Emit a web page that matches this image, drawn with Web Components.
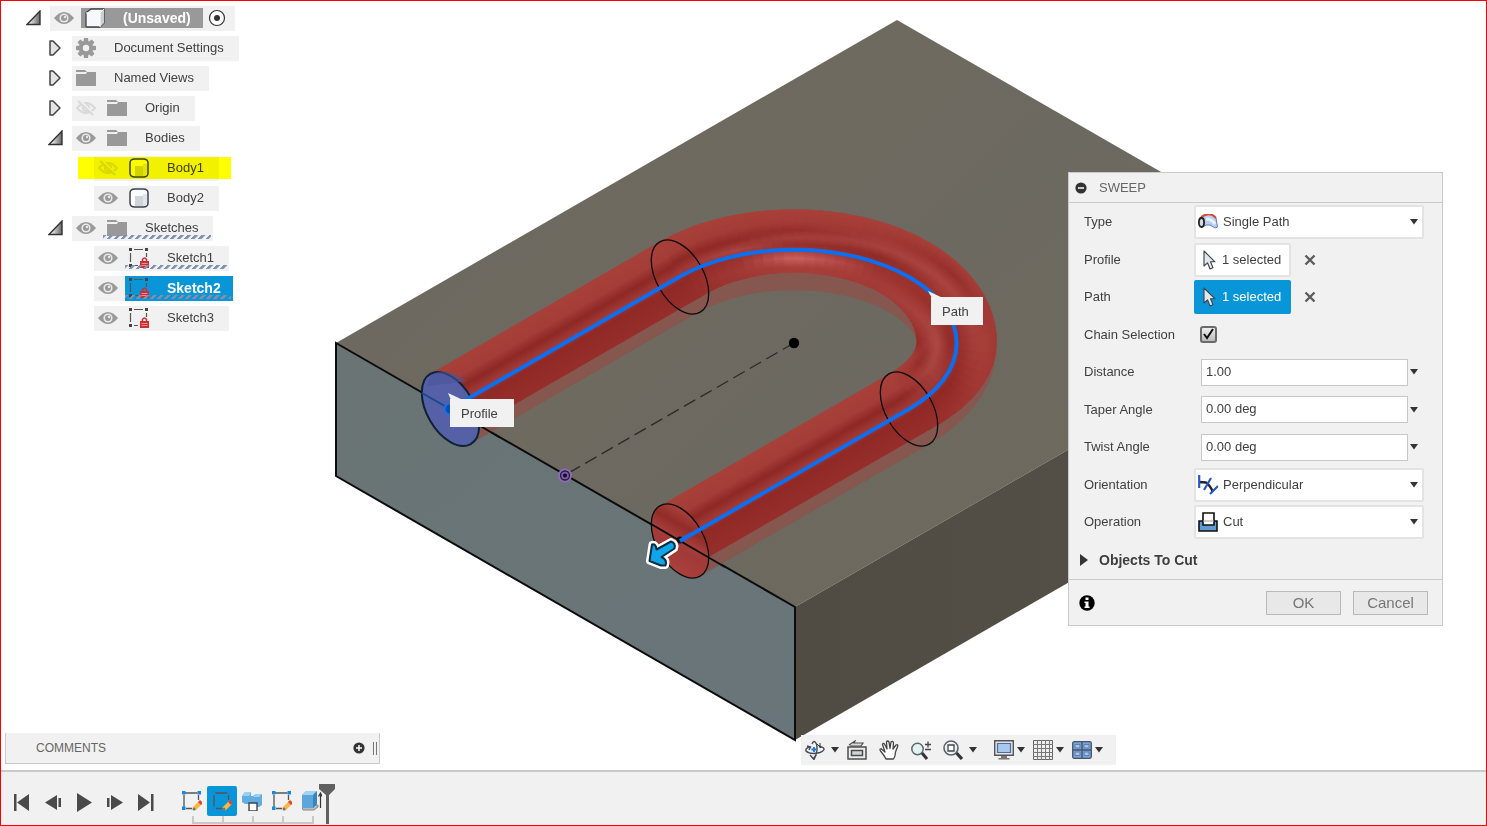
<!DOCTYPE html>
<html lang="en">
<head>
<meta charset="utf-8">
<title>Sweep</title>
<style>
html,body{margin:0;height:100%}
body{font:13px/16px "Liberation Sans",Arial,sans-serif;color:#3f3f3f;background:#fff}
</style>
</head>
<body>
<cad-app></cad-app>
<script>
const ICONS = {
  open: '<svg width="16" height="16" viewBox="0 0 16 16"><defs><linearGradient id="g" x1="0" x2="1"><stop offset=".2" stop-color="#eee"/><stop offset="1" stop-color="#666"/></linearGradient></defs><path d="M1 14.5H14V1Z" fill="url(#g)" stroke="#333" stroke-width="1.4"/></svg>',
  closed: '<svg width="16" height="16" viewBox="0 0 16 16"><path d="M2 1H5L12 8L5 15H2Z" fill="#e4e4e4" stroke="#444" stroke-width="1.5" stroke-linejoin="round"/></svg>',
  eye: '<svg width="20" height="16" viewBox="0 0 20 16"><path d="M0 8Q10-4 20 8Q10 20 0 8Z" fill="#999"/><circle cx="10" cy="8" r="4.6" fill="#e9e9e9"/><circle cx="10" cy="8" r="3" fill="#999"/><circle cx="11" cy="7" r="1.2" fill="#e9e9e9"/></svg>',
  hidden: '<svg width="20" height="16" viewBox="0 0 20 16"><g fill="none" stroke="#d9d9d9" stroke-width="2"><path d="M1 8Q10-2 19 8Q10 18 1 8Z"/><circle cx="10" cy="8" r="3"/><path d="M3 0L18 15" stroke="#f0f0f0" stroke-width="3"/><path d="M2 1L17 15"/></g></svg>',
  cube: '<svg width="20" height="20" viewBox="0 0 20 20"><path d="M1 5Q1 4 2 4L6 1H19V15L15 19H2Q1 19 1 18Z" fill="#f7f8fa" stroke="#444" stroke-width="1.3" stroke-linejoin="round"/><path d="M15 5L19 1V15L15 19Z" fill="#c9cfd8"/><path d="M1 5H15V19M15 5L19 1" fill="none" stroke="#fff"/></svg>',
  gear: '<svg width="20" height="20" viewBox="0 0 20 20"><g fill="#999"><circle cx="10" cy="10" r="7"/><path d="M8 0H12L12.6 4H7.4ZM8 20H12L12.6 16H7.4Z"/><path d="M8 0H12L12.6 4H7.4ZM8 20H12L12.6 16H7.4Z" transform="rotate(45 10 10)"/><path d="M8 0H12L12.6 4H7.4ZM8 20H12L12.6 16H7.4Z" transform="rotate(90 10 10)"/><path d="M8 0H12L12.6 4H7.4ZM8 20H12L12.6 16H7.4Z" transform="rotate(135 10 10)"/></g><circle cx="10" cy="10" r="3.2" fill="#f1f1f1"/></svg>',
  folder: '<svg width="20" height="16" viewBox="0 0 20 16"><path d="M0 0H9L11 2H0ZM0 4H10L11 2H20V16H0Z" fill="#999"/><path d="M0 2.6H9" stroke="#eee"/></svg>',
  body: '<svg width="20" height="20" viewBox="0 0 20 20"><path d="M1 5Q1 1 6 1H14Q19 1 19 5V15Q19 19 14 19H6Q1 19 1 15Z" fill="#fbfbfc" stroke="#3c434d" stroke-width="1.5"/><path d="M6 8H14V18H6Z" fill="#aeb4be" opacity=".55"/><path d="M14 6H18V15Q18 18 14 18Z" fill="#e2e5ea"/></svg>',
  sketch: '<svg width="20" height="20" viewBox="0 0 20 20"><g stroke="#555" stroke-width="1.2" fill="none"><path d="M5 1.5H14M1.5 5V14M17.500 5V9M5 17.500H9"/></g><g fill="#444"><path d="M0 0H3V3H0ZM16 0H19V3H16ZM0 16H3V19H0Z"/></g><path d="M13.500 14V11.500Q15.500 8.500 17.500 11.500V14" fill="none" stroke="#cc2e35" stroke-width="1.500"/><path d="M11 13H20V20H11Z" fill="#cc2e35"/><path d="M12.500 15.500H18.500M12.500 17.500H18.500" stroke="#f08f8f"/></svg>',
  target: '<svg width="18" height="18" viewBox="0 0 18 18"><circle cx="9" cy="9" r="7.5" fill="#fff" stroke="#333" stroke-width="1.2"/><circle cx="9" cy="9" r="3" fill="#333"/></svg>',
  minus: '<svg width="12" height="12" viewBox="0 0 12 12"><circle cx="6" cy="6" r="5.600" fill="#333"/><path d="M3 6H9" stroke="#fff" stroke-width="1.500"/></svg>',
  plus: '<svg width="12" height="12" viewBox="0 0 12 12"><circle cx="6" cy="6" r="5.600" fill="#333"/><path d="M3 6H9M6 3V9" stroke="#fff" stroke-width="1.500"/></svg>',
  down: '<svg width="8" height="6" viewBox="0 0 8 6"><path d="M0 0H8L4 5.500Z" fill="#333"/></svg>',
  right: '<svg width="8" height="12" viewBox="0 0 8 12"><path d="M0 0L8 6L0 12Z" fill="#333"/></svg>',
  cross: '<svg width="12" height="12" viewBox="0 0 12 12"><path d="M1.500 1.500L10.500 10.500M10.500 1.500L1.500 10.500" stroke="#5d5d5d" stroke-width="2.400"/></svg>',
  info: '<svg width="16" height="16" viewBox="0 0 16 16"><circle cx="8" cy="8" r="7.700" fill="#000"/><path d="M6.500 2.500H9.500V5H6.500ZM5.500 6.500H9.500V11.500H10.500V13H5.500V11.500H6.500V8H5.500Z" fill="#fff"/></svg>',
  cursor: '<svg width="13" height="20" viewBox="0 0 13 20"><path d="M1 1V16L4.500 12.800L7 19L10 17.800L7.500 11.800H12Z" fill="#e3e6ea" stroke="#3d444d" stroke-width="1.100" stroke-linejoin="round"/></svg>',
  pipe: '<svg width="20" height="16" viewBox="0 0 20 16"><path d="M3 3Q12-3 18 4L19.500 13L17 14L12 11Q9 10 4 13Z" fill="#b9cfec" stroke="#5c7fb8"/><path d="M8 5Q14 5 17 10" stroke="#e9f1fb" stroke-width="3" fill="none"/><path d="M3 3Q12-3 18 4" fill="none" stroke="#d8473e" stroke-width="2"/><ellipse cx="3.500" cy="8.500" rx="2.600" ry="4.500" fill="#d7dade" stroke="#222" stroke-width="1.800"/></svg>',
  perp: '<svg width="20" height="20" viewBox="0 0 20 20"><path d="M1 7L8 7.500Q12 10 15 17" fill="none" stroke="#222" stroke-width="2.400"/><path d="M1.200 0V13M13 3L6 15M20 11L12 19" fill="none" stroke="#2456cf" stroke-width="2.200"/></svg>',
  cut: '<svg width="20" height="20" viewBox="0 0 20 20"><path d="M1 9H19V19H1Z" fill="#5f9bd0" stroke="#111" stroke-width="1.600"/><path d="M5 1H16V13H5Z" fill="#fff" stroke="#111" stroke-width="1.600"/><path d="M5 9H16" stroke="#999"/></svg>',
  orbit: '<svg width="20" height="20" viewBox="0 0 20 20"><g fill="none" stroke="#454c55" stroke-width="1.400"><path d="M7 4Q9-1 11.500 4Q13 10 10.500 16L8 19"/><path d="M5 7Q0 8 1 11Q5 15 15 12.500Q21 10 18 7.500L14 6"/><path d="M5 15L9 19.500L11 15M2 6L5.500 7L4 10" /></g><path d="M9 7V12M6.500 9.500H11.500" stroke="#1a7cd6" stroke-width="1.800"/><path d="M12 4L16 8M15 3V8" stroke="#333"/></svg>',
  lookat: '<svg width="20" height="20" viewBox="0 0 20 20"><path d="M1 7H19V19H1Z" fill="#eee" stroke="#4c4c4c" stroke-width="1.500"/><path d="M4.500 10.500H15.500V15.500H4.500Z" fill="#d0d5db" stroke="#4c4c4c" stroke-width="1.500"/><path d="M2 5L8 1L7 3H16L14 6H3" fill="#ddd" stroke="#4c4c4c" stroke-width="1.200"/></svg>',
  hand: '<svg width="20" height="20" viewBox="0 0 20 20"><path d="M7 19Q5 15 1.500 11Q0 8.500 2.500 9L6 12L3.500 4.500Q4 2.500 5.500 4L8 9L7.500 2Q8.500 0 10 2L11 8.500L12 2Q13.500.500 14.500 2.500L14 9L17 5Q19 4 18.800 6L16.500 12Q16.500 16 14.500 19Z" fill="#fff" stroke="#454545" stroke-width="1.300" stroke-linejoin="round"/></svg>',
  zoom: '<svg width="20" height="20" viewBox="0 0 20 20"><circle cx="6.500" cy="9" r="5.700" fill="#e3f2f2" stroke="#5b666b" stroke-width="1.500"/><path d="M11 13L16 19" stroke="#333" stroke-width="3"/><path d="M14 4.500H20M17 1.500V7.500M14 9.500H20" stroke="#444" stroke-width="1.300"/></svg>',
  fit: '<svg width="20" height="20" viewBox="0 0 20 20"><circle cx="8" cy="8" r="7" fill="#eef1f2" stroke="#5b6468" stroke-width="1.600"/><path d="M5 5H11V11H5Z" fill="#fff" stroke="#444" stroke-width="1.300"/><path d="M13.500 13L19 19" stroke="#333" stroke-width="3.200"/></svg>',
  display: '<svg width="20" height="20" viewBox="0 0 20 20"><path d="M.7.700H19.300V15.300H.7Z" fill="#e2e6ea" stroke="#555" stroke-width="1.400"/><path d="M3.500 3.500H16.500V12.500H3.500Z" fill="#a9c8ee" stroke="#4b6e9d" stroke-width="1.200"/><path d="M7 16H13V18H15.500V19.500H4.500V18H7Z" fill="#777"/></svg>',
  grid: '<svg width="20" height="20" viewBox="0 0 20 20"><path d="M.5.500H19.500V19.500H.5Z" fill="#eee" stroke="#666"/><path d="M4.500 0V20M8.500 0V20M12.500 0V20M16.500 0V20M0 4.500H20M0 8.500H20M0 12.500H20M0 16.500H20" stroke="#777"/></svg>',
  views: '<svg width="20" height="18" viewBox="0 0 20 18"><rect x=".7" y=".7" width="18.600" height="16.600" rx="1.500" fill="#7ca2d3" stroke="#41556f" stroke-width="1.300"/><path d="M3 3.500H8V7H3ZM12 3.500H17V7H12ZM3 11H8V14.500H3ZM12 11H17V14.500H12Z" fill="#a6c3e8" stroke="#5c7fae"/><path d="M10 1V17M1 9H19" stroke="#41556f" stroke-width="1.400"/></svg>',
  first: '<svg width="20" height="20" viewBox="0 0 20 20"><path d="M2 1H4.500V18H2ZM17 1V18L5 9.500Z" fill="#4a4a4a"/></svg>',
  prev: '<svg width="20" height="20" viewBox="0 0 20 20"><path d="M14 2V17L2 9.500ZM15.500 5H18V14H15.500Z" fill="#4a4a4a"/></svg>',
  play: '<svg width="20" height="20" viewBox="0 0 20 20"><path d="M3 0L18 9.500L3 19Z" fill="#4a4a4a"/></svg>',
  next: '<svg width="20" height="20" viewBox="0 0 20 20"><path d="M6 2V17L18 9.500ZM2 5H4.500V14H2Z" fill="#4a4a4a"/></svg>',
  last: '<svg width="20" height="20" viewBox="0 0 20 20"><path d="M2 1V18L14 9.500ZM15 1H17.500V18H15Z" fill="#4a4a4a"/></svg>',
  edit: '<svg width="20" height="20" viewBox="0 0 20 20"><path d="M3 2H15.500M2 4V16M16.500 4V9M4 17.500H10" fill="none" stroke="#555" stroke-width="1.300"/><path d="M0 0H3.500V3.500H0ZM15.500 0H19V3.500H15.500ZM0 15.500H3.500V19H0Z" fill="#1489e0"/><path d="M12 18L19 11" stroke="#f5b942" stroke-width="4.200"/><path d="M17.500 12.500L19.500 10.500" stroke="#e4403b" stroke-width="4"/><circle cx="12" cy="18" r="1.500" fill="#777"/></svg>',
  combine: '<svg width="20" height="20" viewBox="0 0 20 20"><path d="M0 5L3 1H9V5H11L14 3H20V14L17 16H11V13H3L0 11Z" fill="#62aee3"/><path d="M0 5L3 1H9L7 5ZM11 6L14 3H20L17 6Z" fill="#9bd0f2"/><path d="M7 12H15V20H7Z" fill="#fff" stroke="#444" stroke-width="1.400"/></svg>',
  extrude: '<svg width="20" height="20" viewBox="0 0 20 20"><path d="M0 16L1 19H12L16 16V14Z" fill="#bbb" stroke="#888"/><path d="M0 4L4 0H15V13L11 17H0Z" fill="#5ba6dd"/><path d="M0 4L4 0H15L11 4Z" fill="#a4d3f2"/><path d="M11 4L15 0V13L11 17Z" fill="#3b84bd"/><path d="M18.500 17V3M16.500 5.500L18.500 2L20 5.500" fill="none" stroke="#333" stroke-width="1.200"/></svg>'
};

class Base extends HTMLElement {
  render(css, html) {
    const t = document.createElement('template');
    t.innerHTML = `<style>*{box-sizing:border-box}svg{display:block;flex:none}${css}</style>${html}`;
    this.attachShadow({mode:'open'}).append(t.content.cloneNode(true));
  }
}

customElements.define('cad-icon', class extends Base {
  connectedCallback() { this.render(':host{display:block;flex:none}', ICONS[this.getAttribute('name')]); }
});

customElements.define('tree-row', class extends Base {
  connectedCallback() {
    const a = n => this.getAttribute(n);
    const ic = n => `<cad-icon name="${n}"></cad-icon>`;
    this.render(`
      :host{display:flex;align-items:center;height:30px;position:relative;padding-left:calc(var(--level) * 22px + 25px)}
      .arrow{width:24px;flex:none;border:0;padding:0;background:none}
      .chip{display:flex;align-items:center;height:25px;background:#f1f1f1}
      .eye{display:block;width:20px;margin:0 7px 0 4px;border:0;padding:0;background:none}
      .item{display:flex;align-items:center;gap:18px;height:100%;padding:0 15px 0 4px;position:relative}
      .icon{width:20px;display:flex;justify-content:center}
      .extra{padding:0 9px 0 5px}
      :host([strong]) .item{font-weight:bold;font-size:14px;color:#fff;padding-right:12px}
      :host([strong=grey]) .item{background:#999;height:20px}
      :host([strong=blue]) .item{background:#0996d8}
      :host([hatch]) .item::after{content:"";position:absolute;left:0;right:2px;bottom:2px;height:4px;
        background:repeating-linear-gradient(135deg,#7f92b5 0 2px,transparent 3px 5px)}
      :host([strong=blue]) .item::after{background:repeating-linear-gradient(135deg,#8b8ba6 0 2px,transparent 3px 5px)}
      :host([marked])::after{content:"";position:absolute;left:77px;width:153px;top:4px;height:22px;background:#ff0;mix-blend-mode:multiply}
    `, `${a('state') ? `<button class="arrow" aria-label="Toggle">${ic(a('state'))}</button>` : '<span class="arrow"></span>'}
      <div class="chip">${a('eye') ? `<button class="eye" aria-label="Visibility">${ic(a('eye'))}</button>` : ''}
      <div class="item"><span class="icon">${ic(a('icon'))}</span><span><slot></slot></span></div>
      ${a('icon') === 'cube' ? `<span class="extra">${ic('target')}</span>` : ''}</div>`);
    this.style.setProperty('--level', a('level'));
  }
});

customElements.define('browser-tree', class extends Base {
  connectedCallback() {
    this.render(':host{display:block;padding-top:2px}', `
      <tree-row level="0" state="open" eye="eye" icon="cube" strong="grey">(Unsaved)</tree-row>
      <tree-row level="1" state="closed" icon="gear">Document Settings</tree-row>
      <tree-row level="1" state="closed" icon="folder">Named Views</tree-row>
      <tree-row level="1" state="closed" eye="hidden" icon="folder">Origin</tree-row>
      <tree-row level="1" state="open" eye="eye" icon="folder">Bodies</tree-row>
      <tree-row level="2" eye="hidden" icon="body" marked>Body1</tree-row>
      <tree-row level="2" eye="eye" icon="body">Body2</tree-row>
      <tree-row level="1" state="open" eye="eye" icon="folder" hatch>Sketches</tree-row>
      <tree-row level="2" eye="eye" icon="sketch" hatch>Sketch1</tree-row>
      <tree-row level="2" eye="eye" icon="sketch" strong="blue" hatch>Sketch2</tree-row>
      <tree-row level="2" eye="eye" icon="sketch">Sketch3</tree-row>`);
  }
});

/* One line of the dialog: a label and the control that goes with it. */
customElements.define('field-row', class extends Base {
  connectedCallback() {
    const kind = this.getAttribute('kind'), label = this.getAttribute('label');
    const value = this.getAttribute('value'), icon = this.getAttribute('icon');
    const control = {
      select: `<div class="wrap"><cad-icon name="${icon}"></cad-icon><select id="c"><option>${value}</option></select><cad-icon class="down" name="down"></cad-icon></div>`,
      pick: `<button id="c" class="pick"><cad-icon name="cursor"></cad-icon>${value}</button><button class="clear" aria-label="Clear ${label}"><cad-icon name="cross"></cad-icon></button>`,
      check: '<input id="c" type="checkbox" checked>',
      text: `<input id="c" class="text" type="text" value="${value}"><button class="more" aria-label="Options"><cad-icon name="down"></cad-icon></button>`
    }[kind];
    this.render(`
      :host{display:flex;align-items:center;padding:0 18px 0 15px}
      :host([kind=text]){padding-right:24px}
      label{width:110px;flex:none}
      button,input,select{font:inherit;color:inherit;margin:0}
      .wrap{flex:1;position:relative;display:flex;align-items:center}
      .wrap cad-icon{position:absolute;left:4px;width:20px}
      .wrap .down{left:auto;right:6px;width:8px}
      select{appearance:none;width:100%;height:34px;padding:0 0 0 27px;border:2px solid #e3e3e3;border-radius:2px;background:#fff}
      .pick{display:flex;align-items:center;gap:6px;width:97px;height:34px;padding:0 0 0 7px;border:2px solid #e3e3e3;border-radius:2px;background:#fff;white-space:nowrap}
      :host([active]) .pick{background:#0996d8;border-color:#0996d8;color:#fff}
      .clear,.more{border:0;background:none;padding:0}
      .clear{margin-left:13px}
      .more{margin-left:2px}
      .text{flex:1;min-width:0;height:27px;margin-left:7px;padding:0 4px 2px;border:1px solid #c8c8c8;background:#fff}
      [type=checkbox]{appearance:none;width:17px;height:17px;margin-left:6px;border:2px solid #6a6a6a;border-radius:3px;
        background:url("data:image/svg+xml,%3Csvg xmlns='http://www.w3.org/2000/svg' viewBox='0 0 13 13'%3E%3Cpath d='M2 6L5 10L11 1' fill='none' stroke='%23111' stroke-width='2'/%3E%3C/svg%3E"),linear-gradient(#eee,#bbb)}
    `, `<label for="c">${label}</label>${control}`);
  }
});

customElements.define('sweep-dialog', class extends Base {
  connectedCallback() {
    this.render(`
      :host{display:block;width:375px;background:#f1f1f1;border:1px solid #c9c9c9;box-sizing:border-box}
      header{display:flex;align-items:center;gap:12px;height:30px;padding-left:6px;border-bottom:1px solid #c9c9c9;color:#666}
      h2{margin:0;font:inherit}
      .rows>*{height:37px}
      .rows>:nth-child(odd){height:38px}
      .group{display:flex;align-items:center;gap:11px;border:0;background:none;padding:0 0 0 11px;font:bold 14px/16px "Liberation Sans",Arial,sans-serif;color:#3f3f3f}
      footer{display:flex;align-items:center;gap:12px;height:46px;padding:0 14px 0 10px;border-top:1px solid #c9c9c9;margin-top:1px}
      footer button{width:75px;height:24px;border:1px solid #b9b9b9;background:#e8e8e8;color:#777;font:15px/16px "Liberation Sans",Arial,sans-serif;padding:0}
      .info{margin-right:auto}
    `, `<header><cad-icon name="minus"></cad-icon><h2>SWEEP</h2></header>
      <div class="rows">
        <field-row kind="select" label="Type" icon="pipe" value="Single Path"></field-row>
        <field-row kind="pick" label="Profile" value="1 selected"></field-row>
        <field-row kind="pick" label="Path" value="1 selected" active></field-row>
        <field-row kind="check" label="Chain Selection"></field-row>
        <field-row kind="text" label="Distance" value="1.00"></field-row>
        <field-row kind="text" label="Taper Angle" value="0.00 deg"></field-row>
        <field-row kind="text" label="Twist Angle" value="0.00 deg"></field-row>
        <field-row kind="select" label="Orientation" icon="perp" value="Perpendicular"></field-row>
        <field-row kind="select" label="Operation" icon="cut" value="Cut"></field-row>
        <button class="group"><cad-icon name="right"></cad-icon>Objects To Cut</button>
      </div>
      <footer><cad-icon class="info" name="info"></cad-icon><button>OK</button><button>Cancel</button></footer>`);
  }
});

/* The solid block and the preview of the swept tube. */
customElements.define('model-view', class extends Base {
  /* Shaded stripes of the bend: colours by angle along it and by offset from its centre line. */
  bend() {
    const A = 162.6, B = 93.3, cx = 794, cy = 343;
    const keys = [
      [0,   [[40,'a8403a'],[24,'a43c37'],[14,'8e2825'],[3,'a03a37'],[-4,'902825'],[-14,'932b28'],[-40,'98302d']]],
      [.14, [[40,'a8403a'],[26,'a43c37'],[14,'902a27'],[5,'a94542'],[-3,'993330'],[-16,'a23a36'],[-40,'98302d']]],
      [.25, [[40,'a8403a'],[28,'a43c37'],[19,'962e2b'],[12,'a6403c'],[4,'952d2a'],[-9,'cc6260'],[-18,'a8403a'],[-40,'a23a36']]],
      [.42, [[40,'a8403a'],[26,'a03834'],[15,'a8423e'],[6,'8f2a27'],[-4,'9a322e'],[-18,'a53c38'],[-40,'9c332f']]],
      [.58, [[40,'a8403a'],[28,'962e2b'],[16,'ab4540'],[4,'9e3631'],[-10,'9a302c'],[-25,'a9433f'],[-40,'98302b']]],
      [.75, [[40,'9f3732'],[28,'a8403a'],[16,'a53e39'],[2,'97302c'],[-8,'932b28'],[-20,'ae4a46'],[-32,'a03833'],[-40,'8f2a27']]],
      [.88, [[40,'a33a35'],[22,'9c322e'],[6,'902825'],[-6,'a23b38'],[-19,'a94440'],[-30,'952d29'],[-40,'a53d38']]],
      [1,   [[40,'98302d'],[14,'932b28'],[4,'902825'],[-3,'a03a37'],[-14,'8e2825'],[-24,'a43c37'],[-40,'a8403a']]]
    ];
    const rgb = h => [0,2,4].map(i => parseInt(h.substr(i,2),16));
    const mix = (a,b,t) => a.map((v,i) => v + (b[i]-v)*t);
    const across = (stops,s) => {
      for (let i=1;i<stops.length;i++) if (s >= stops[i][0]) {
        const [p,c] = stops[i-1], [q,d] = stops[i];
        return mix(rgb(c),rgb(d),(p-s)/(p-q));
      }
      return rgb(stops[stops.length-1][1]);
    };
    const colour = (t,s) => {
      let i = 1; while (i < keys.length-1 && t > keys[i][0]) i++;
      const k = (t-keys[i-1][0])/(keys[i][0]-keys[i-1][0]);
      return mix(across(keys[i-1][1],s),across(keys[i][1],s),Math.min(1,Math.max(0,k))).map(Math.round);
    };
    const point = (t,s) => {
      const th = Math.PI*(t-.75), c = Math.cos(th), d = Math.sin(th);
      const nx = c/A, ny = d/B, n = Math.hypot(nx,ny);
      return (cx+A*c+s*nx/n).toFixed(1)+' '+(cy+B*d+s*ny/n).toFixed(1);
    };
    let out = '';
    const N = 48;
    for (let s = 39; s >= -39; s -= 2) for (let i = 0; i < N; i++)
      out += `<path d="M${point(i/N,s)}L${point((i+.5)/N,s)}L${point((i+1.25)/N > 1 ? 1 : (i+1.25)/N,s)}" stroke="rgb(${colour((i+.5)/N,s)})"/>`;
    return `<g fill="none" stroke-width="2.6">${out}</g>`;
  }
  connectedCallback() {
    const U = 'M450 409L679 277A162.600 93.300 0 0 1 909 409L680 541';
    const ring = (x,y,extra) => `<ellipse cx="${x}" cy="${y}" rx="40.500" ry="23.500" transform="rotate(60 ${x} ${y})" ${extra}/>`;
    const stops = '<stop offset="0" stop-color="#a8403a"/><stop offset=".2" stop-color="#a43c37"/><stop offset=".33" stop-color="#8e2825"/><stop offset=".46" stop-color="#a03a37"/><stop offset=".56" stop-color="#902825"/><stop offset=".68" stop-color="#932b28"/><stop offset="1" stop-color="#98302d"/>';
    this.render(':host{display:block;overflow:hidden}svg{width:100%;height:100%}text{font-size:13px;fill:#3f3f3f}', `
<svg role="img" aria-label="Sweep preview">
<defs>
<linearGradient id="top" x1="0" y1="0" x2="1" y2=".6"><stop offset="0" stop-color="#6f6b5f"/><stop offset=".25" stop-color="#6e6960"/><stop offset=".45" stop-color="#6f6a60"/><stop offset=".6" stop-color="#6c6961"/><stop offset="1" stop-color="#6f6a5c"/></linearGradient>
<linearGradient id="front" x1="0" y1="0" x2="1" y2="1"><stop offset="0" stop-color="#6a7474"/><stop offset="1" stop-color="#69757a"/></linearGradient>
<linearGradient id="side" x1="0" y1="0" x2="1" y2="0"><stop offset="0" stop-color="#504c44"/><stop offset="1" stop-color="#565147"/></linearGradient>
<linearGradient id="leg1" gradientUnits="userSpaceOnUse" x1="430" y1="374" x2="470" y2="444">${stops}</linearGradient>
<linearGradient id="leg2" gradientUnits="userSpaceOnUse" x1="660" y1="506" x2="700" y2="576">${stops}</linearGradient>
<linearGradient id="cap" gradientUnits="userSpaceOnUse" x1="660" y1="506" x2="700" y2="576"><stop offset="0" stop-color="#a8403a"/><stop offset=".15" stop-color="#a8403a"/><stop offset=".33" stop-color="#922c29"/><stop offset=".48" stop-color="#a53e3b"/><stop offset=".6" stop-color="#a03a38"/><stop offset="1" stop-color="#b2433f"/></linearGradient>
<clipPath id="above"><path clip-rule="evenodd" d="M400 150H1010V343H996.600A202.600 116.300 0 0 1 937.300 425.300L708.300 557.300L690 580L400 600ZM478.300 425.300L707.300 293.300A122.600 70.400 0 0 1 916.600 343L794 343L565 475V520H460Z"/></clipPath>
</defs>
<path d="M336 343L897 20L1356 284L795 607Z" fill="url(#top)"/>
<path d="M336 343L795 607V740L336 476Z" fill="url(#front)"/>
<path d="M795 607L1356 284V417L795 740Z" fill="url(#side)"/>
<path d="M336 343L795 607V740L336 476Z" fill="none" stroke="#0b0b0b" stroke-width="2"/>
<path d="M794 343L565 475" stroke="#2c2a27" stroke-width="1.300" stroke-dasharray="13 6"/>
<path d="${U}" fill="none" stroke="#85574f" stroke-width="81"/>
<g clip-path="url(#above)">
${this.bend()}
<path d="M430 374L660 241.500L700 311.500L470 444Z" fill="url(#leg1)"/>
<path d="M660 506L890 373.500L930 443.500L700 576Z" fill="url(#leg2)"/>
</g>
${ring(680,541,'fill="url(#cap)"')}
<path d="M470 420L500 437.500M651 524L725 567" stroke="#0b0b0b" stroke-width="2"/>
${ring(680,541,'fill="none" stroke="#0b0b0b" stroke-width="1.300"')}
${ring(680,277,'fill="none" stroke="#0b0b0b" stroke-width="1.300"')}
${ring(909,409,'fill="none" stroke="#0b0b0b" stroke-width="1.300"')}
${ring(450.500,409,'fill="#5560a6" stroke="#0e2236" stroke-width="2"')}
<path d="M427 386Q445 384 467 381L460 377Q440 366 430 377Z" fill="#4a559c" opacity=".6"/>
<path d="M422 393L450 409" stroke="#174a91" stroke-width="2"/>
<path d="${U}" fill="none" stroke="#0c6ff0" stroke-width="4"/>
<circle cx="450" cy="409" r="5.500" fill="#0b4fae" stroke="#1b70ea" stroke-width="2"/>
<circle cx="680" cy="540" r="3.500" fill="#111"/>
<path d="M680 541L690 535" stroke="#0c6ff0" stroke-width="4"/>
<circle cx="794" cy="343" r="5.200" fill="#000"/>
<circle cx="565" cy="475.500" r="6" fill="#7f62a8" stroke="#8d6db8" stroke-width="2"/><circle cx="565" cy="475.500" r="4.500" fill="#7a5ba8" stroke="#291a47" stroke-width="1.300"/><circle cx="565" cy="475.500" r="2" fill="#111"/>
<path id="grip" d="M649.500 561L652 544.500Q656 543.500 656.500 549.500L671 541.500Q676 543 674.500 548.500L661.500 557Q667.500 559.500 665.500 565.500L661 565.500Z" fill="#fff" stroke="#fff" stroke-width="7" stroke-linejoin="round"/>
<path d="M649.500 561L652 544.500Q656 543.500 656.500 549.500L671 541.500Q676 543 674.500 548.500L661.500 557Q667.500 559.500 665.500 565.500L661 565.500Z" fill="#10a5e8" stroke="#0c2f40" stroke-width="2" stroke-linejoin="round"/>
<path d="M448 393L463 400H451Z" fill="#f1f1f1"/><rect x="450" y="399" width="64" height="28" fill="#f1f1f1"/><text x="461" y="418">Profile</text>
<path d="M928 291L943 298H932Z" fill="#f1f1f1"/><rect x="931" y="297" width="52" height="28" fill="#f1f1f1"/><text x="942" y="316">Path</text>
</svg>`);
  }
});

customElements.define('comments-bar', class extends Base {
  connectedCallback() {
    this.render(`:host{display:flex;align-items:center;width:375px;height:31px;padding:0 2px 0 30px;background:#f1f1f1;border:solid #c9c9c9;border-width:0 1px 1px;font-size:12px;color:#666;box-sizing:border-box}
      button{margin-left:auto;border:0;padding:0;background:none}
      i{width:4px;height:13px;margin-left:8px;border:solid #777;border-width:0 1px}`,
      '<span>COMMENTS</span><button aria-label="Add comment"><cad-icon name="plus"></cad-icon></button><i></i>');
  }
});

customElements.define('nav-bar', class extends Base {
  connectedCallback() {
    const b = (n, menu) => `<button class="${menu || ''}" aria-label="${n}"><cad-icon name="${n}"></cad-icon>${menu ? '<cad-icon name="down"></cad-icon>' : ''}</button>`;
    this.render(`:host{display:flex;align-items:center;height:30px;margin-top:2px;background:#f1f1f1;padding:0 13px 0 4px}
      button{display:flex;align-items:center;border:0;padding:0;background:none;margin-right:12px}
      .wide{gap:6px;margin-right:8px}
      .tight{gap:3px;margin-right:8px}
      .wide+.tight{margin-left:9px}
      button:last-child{margin-right:0}`,
      b('orbit','wide')+b('lookat')+b('hand')+b('zoom')+b('fit','wide')+b('display','tight')+b('grid','tight')+b('views','tight'));
  }
});

customElements.define('time-line', class extends Base {
  connectedCallback() {
    const b = (n, c) => `<button class="${c || ''}" aria-label="${n}"><cad-icon name="${n}"></cad-icon></button>`;
    this.render(`:host{display:flex;height:55px;padding:14px 0 0 5px;gap:16px;background:#f1f1f1;border-top:2px solid #c9c9c9;box-sizing:border-box}
      button{display:flex;align-items:center;justify-content:center;height:30px;border:0;padding:0;background:none}
      .play{display:flex}.play button{width:31px;padding-top:3px}
      .steps{display:flex;position:relative}.steps button{width:30px;border-radius:2px}
      .steps .on{background:#0996d8}
      .line{position:absolute;left:15px;top:30px;width:122px;height:8px;border-bottom:2px solid #c8c8c8;background:repeating-linear-gradient(90deg,#c8c8c8 0 2px,transparent 2px 30px)}
      .marker{position:absolute;left:142px;top:-2px}`,
      `<div class="play">${['first','prev','play','next','last'].map(n => b(n)).join('')}</div>
       <div class="steps">${b('edit')+b('edit','on')+b('combine')+b('edit')+b('extrude')}<span class="line"></span>
       <svg class="marker" width="16" height="40" viewBox="0 0 16 40"><path d="M0 0H16V5L10 11V40H7V11L0 5Z" fill="#606060"/></svg></div>`);
  }
});

customElements.define('cad-app', class extends Base {
  connectedCallback() {
    this.render(`
      :host{display:flex;flex-direction:column;min-height:100vh;border:1px solid #f00;box-sizing:border-box}
      main{flex:1;position:relative;display:flex;flex-direction:column;justify-content:space-between}
      model-view{position:absolute;top:-1px;left:-1px;right:0;bottom:0}
      .upper,.lower{position:relative;display:flex;justify-content:space-between;align-items:flex-start}
      sweep-dialog{margin:171px 43px 0 0}
      .lower{padding:0 370px 5px 4px}`,
      `<main><model-view></model-view><div class="upper"><browser-tree></browser-tree><sweep-dialog></sweep-dialog></div>
       <div class="lower"><comments-bar></comments-bar><nav-bar></nav-bar></div></main><time-line></time-line>`);
  }
});
</script>
</body>
</html>
